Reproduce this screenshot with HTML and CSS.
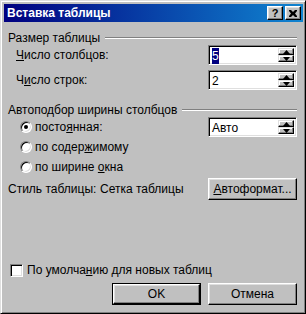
FILE: index.html
```html
<!DOCTYPE html>
<html lang="ru">
<head>
    <meta charset="UTF-8">
    <title>Вставка таблицы</title>
    <link rel="stylesheet" href="styles.css">
</head>
<body>
    <div class="window">
        <div class="titlebar">
            <span class="title">Вставка таблицы</span>
            <div class="tbtns">
                <span class="tbtn help">?</span>
                <span class="tbtn close">
                    <svg width="8" height="7" viewBox="0 0 8 7"><path d="M0 0h2l2 2 2-2h2v1l-2 2.5 2 2.5v1h-2l-2-2-2 2h-2v-1l2-2.5-2-2.5z" fill="#000"/></svg>
                </span>
            </div>
        </div>

        <div class="content">
            <div class="group-head first"><span>Размер таблицы</span><i class="etch"></i></div>

            <div class="row indent">
                <span class="lbl"><u>Ч</u>исло столбцов:</span>
                <div class="spin">
                    <span class="val"><span class="sel">5</span></span>
                    <span class="arrows">
                        <span class="arr"><svg width="7" height="4" viewBox="0 0 7 4"><path d="M3.5 0L7 4H0z"/></svg></span>
                        <span class="arr"><svg width="7" height="4" viewBox="0 0 7 4"><path d="M0 0h7L3.5 4z"/></svg></span>
                    </span>
                </div>
            </div>

            <div class="row indent second">
                <span class="lbl">Ч<u>и</u>сло строк:</span>
                <div class="spin">
                    <span class="val">2</span>
                    <span class="arrows">
                        <span class="arr"><svg width="7" height="4" viewBox="0 0 7 4"><path d="M3.5 0L7 4H0z"/></svg></span>
                        <span class="arr"><svg width="7" height="4" viewBox="0 0 7 4"><path d="M0 0h7L3.5 4z"/></svg></span>
                    </span>
                </div>
            </div>

            <div class="group-head"><span>Автоподбор ширины столбцов</span><i class="etch"></i></div>

            <div class="row radio-row">
                <span class="opt"><i class="radio on"></i><span>посто<u>я</u>нная:</span></span>
                <div class="spin">
                    <span class="val">Авто</span>
                    <span class="arrows">
                        <span class="arr"><svg width="7" height="4" viewBox="0 0 7 4"><path d="M3.5 0L7 4H0z"/></svg></span>
                        <span class="arr"><svg width="7" height="4" viewBox="0 0 7 4"><path d="M0 0h7L3.5 4z"/></svg></span>
                    </span>
                </div>
            </div>
            <div class="row radio-row">
                <span class="opt"><i class="radio"></i><span>по содер<u>ж</u>имому</span></span>
            </div>
            <div class="row radio-row">
                <span class="opt"><i class="radio"></i><span>по ширине <u>о</u>кна</span></span>
            </div>

            <div class="row style-row">
                <span class="style-lbl">Стиль таблицы:</span>
                <span class="style-val">Сетка таблицы</span>
                <span class="btn"><span><u>А</u>втоформат...</span></span>
            </div>

            <div class="bottom">
                <div class="check-row"><i class="check"></i><span>По умолча<u>н</u>ию для новых таблиц</span></div>
                <div class="actions">
                    <span class="btn default"><span class="in">OK</span></span>
                    <span class="btn">Отмена</span>
                </div>
            </div>
        </div>
    </div>
</body>
</html>
```

FILE: styles.css
```css
body {
    margin: 0;
    background: #c0c0c0;
    font-family: "Liberation Sans", Arial, sans-serif;
    font-size: 12px;
    color: #000;
}
u {
    text-decoration: underline;
    text-underline-offset: 1px;
}
.window {
    box-sizing: border-box;
    width: 306px;
    height: 314px;
    background: #c0c0c0;
    border: 1px solid;
    border-color: #dfdfdf #000 #000 #dfdfdf;
    box-shadow: inset 1px 1px #fff, inset -1px -1px #808080;
    padding: 3px 2px 2px 3px;
    display: flex;
    flex-direction: column;
}
.titlebar {
    height: 18px;
    background: linear-gradient(to right, #000080, #1084d0);
    display: flex;
    align-items: center;
    justify-content: space-between;
    padding: 0 2px 0 3px;
}
.title {
    color: #fff;
    font-weight: bold;
    font-size: 12px;
}
.tbtns {
    display: flex;
    gap: 2px;
}
.tbtn {
    box-sizing: border-box;
    width: 16px;
    height: 14px;
    background: #c0c0c0;
    border: 1px solid;
    border-color: #fff #000 #000 #fff;
    box-shadow: inset -1px -1px #808080, inset 1px 1px #dfdfdf;
    display: flex;
    align-items: center;
    justify-content: center;
}
.help {
    font-weight: bold;
    font-size: 11px;
    line-height: 1;
}
.content {
    flex: 1;
    display: flex;
    flex-direction: column;
    padding: 0 6px 0 4px;
}
.group-head {
    height: 14px;
    display: flex;
    align-items: center;
    margin-top: 13px;
}
.group-head.first {
    margin-top: 9px;
}
.etch {
    flex: 1;
    height: 1px;
    background: #808080;
    border-bottom: 1px solid #fff;
    margin: 0 0 0 5px;
}
.row {
    display: flex;
    align-items: center;
    justify-content: space-between;
    height: 20px;
}
.indent {
    padding-left: 8px;
}
.second {
    margin-top: 5px;
}
.spin {
    box-sizing: border-box;
    width: 89px;
    height: 20px;
    background: #fff;
    border: 1px solid;
    border-color: #808080 #fff #fff #808080;
    box-shadow: inset 1px 1px #000, inset -1px -1px #dfdfdf;
    padding: 2px;
    display: flex;
    justify-content: space-between;
}
.val {
    padding-left: 1px;
    line-height: 16px;
}
.sel {
    background: #000080;
    color: #fff;
    padding: 1px 0;
}
.arrows {
    display: flex;
    flex-direction: column;
}
.arr {
    box-sizing: border-box;
    width: 16px;
    height: 8px;
    background: #c0c0c0;
    border: 1px solid;
    border-color: #dfdfdf #000 #000 #dfdfdf;
    box-shadow: inset -1px -1px #808080, inset 1px 1px #fff;
    display: flex;
    align-items: center;
    justify-content: center;
}
.arr svg {
    display: block;
}
.radio-row {
    padding-left: 12px;
}
.opt {
    display: flex;
    align-items: center;
}
.radio {
    box-sizing: border-box;
    width: 12px;
    height: 12px;
    border-radius: 50%;
    background: #fff;
    border: 1px solid;
    border-color: #808080 #fff #fff #808080;
    box-shadow: inset 1px 1px #000, inset -1px -1px #dfdfdf;
    margin-right: 3px;
    display: flex;
    align-items: center;
    justify-content: center;
}
.radio.on::after {
    content: "";
    width: 4px;
    height: 4px;
    border-radius: 50%;
    background: #000;
}
.style-row {
    height: 22px;
    margin-top: 1px;
    justify-content: flex-start;
}
.style-lbl {
    width: 92px;
}
.style-val {
    flex: 1;
}
.btn {
    box-sizing: border-box;
    width: 89px;
    height: 22px;
    background: #c0c0c0;
    border: 1px solid;
    border-color: #fff #000 #000 #fff;
    box-shadow: inset -1px -1px #808080, inset 1px 1px #dfdfdf;
    display: flex;
    align-items: center;
    justify-content: center;
}
.btn.default {
    border: 1px solid #000;
    box-shadow: none;
}
.btn.default .in {
    box-sizing: border-box;
    width: 100%;
    height: 100%;
    border: 1px solid;
    border-color: #fff #000 #000 #fff;
    box-shadow: inset -1px -1px #808080, inset 1px 1px #dfdfdf;
    display: flex;
    align-items: center;
    justify-content: center;
}
.bottom {
    margin-top: auto;
    padding-bottom: 6px;
}
.check-row {
    display: flex;
    align-items: center;
    height: 14px;
    padding-left: 2px;
}
.check {
    box-sizing: border-box;
    width: 13px;
    height: 13px;
    background: #fff;
    border: 1px solid;
    border-color: #808080 #fff #fff #808080;
    box-shadow: inset 1px 1px #000, inset -1px -1px #dfdfdf;
    margin-right: 4px;
}
.actions {
    display: flex;
    justify-content: flex-end;
    gap: 7px;
    margin-top: 6px;
}
```
